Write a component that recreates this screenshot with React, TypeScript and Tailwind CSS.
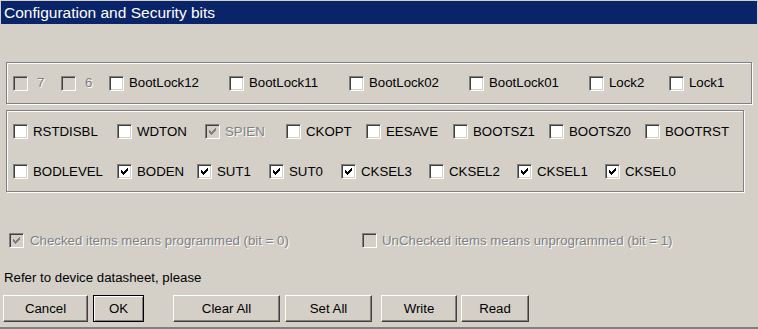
import React from "react";

const CHECK: [number, number][] = [
  [6, 0], [5, 1], [6, 1], [0, 2], [4, 2], [5, 2], [6, 2],
  [0, 3], [1, 3], [3, 3], [4, 3], [5, 3],
  [0, 4], [1, 4], [2, 4], [3, 4], [4, 4],
  [1, 5], [2, 5], [3, 5], [2, 6],
];

function Box({ checked, disabled }: { checked?: boolean; disabled?: boolean }) {
  return (
    <div
      className={`w-[15px] h-[15px] shrink-0 flex items-center justify-center border border-t-[#808080] border-l-[#808080] border-b-white border-r-white shadow-[inset_1px_1px_0_#404040,inset_-1px_-1px_0_#d4d0c8] ${
        disabled ? "bg-[#d4d0c8]" : "bg-white"
      }`}
    >
      {checked && (
        <svg width="7" height="7" viewBox="0 0 7 7" shapeRendering="crispEdges">
          {CHECK.map(([x, y]) => (
            <rect key={`${x}-${y}`} x={x} y={y} width="1" height="1" fill={disabled ? "#808080" : "#000000"} />
          ))}
        </svg>
      )}
    </div>
  );
}

type Item = { label: string; w?: string; checked?: boolean; disabled?: boolean; wide?: boolean };

function Check({ label, w, checked, disabled, wide }: Item) {
  return (
    <div className={`flex items-center shrink-0 ${w ?? ""}`}>
      <Box checked={checked} disabled={disabled} />
      <span
        className={`${wide ? "ml-[9px]" : "ml-[5px]"} whitespace-nowrap ${
          disabled ? "text-[#808080] [text-shadow:1px_1px_0_#ffffff]" : "text-black"
        }`}
      >
        {label}
      </span>
    </div>
  );
}

const row1: Item[] = [
  { label: "7", w: "w-[48px]", disabled: true, wide: true },
  { label: "6", w: "w-[48px]", disabled: true, wide: true },
  { label: "BootLock12", w: "w-[120px]" },
  { label: "BootLock11", w: "w-[120px]" },
  { label: "BootLock02", w: "w-[120px]" },
  { label: "BootLock01", w: "w-[120px]" },
  { label: "Lock2", w: "w-[80px]" },
  { label: "Lock1" },
];

const row2: Item[] = [
  { label: "RSTDISBL", w: "w-[104px]" },
  { label: "WDTON", w: "w-[88px]" },
  { label: "SPIEN", w: "w-[81px]", checked: true, disabled: true },
  { label: "CKOPT", w: "w-[80px]" },
  { label: "EESAVE", w: "w-[87px]" },
  { label: "BOOTSZ1", w: "w-[96px]" },
  { label: "BOOTSZ0", w: "w-[96px]" },
  { label: "BOOTRST" },
];

const row3: Item[] = [
  { label: "BODLEVEL", w: "w-[104px]" },
  { label: "BODEN", w: "w-[80px]", checked: true },
  { label: "SUT1", w: "w-[72px]", checked: true },
  { label: "SUT0", w: "w-[72px]", checked: true },
  { label: "CKSEL3", w: "w-[88px]", checked: true },
  { label: "CKSEL2", w: "w-[88px]" },
  { label: "CKSEL1", w: "w-[88px]", checked: true },
  { label: "CKSEL0", checked: true },
];

function Button({ label, w, def }: { label: string; w: string; def?: boolean }) {
  return (
    <div
      className={`${w} h-[27px] shrink-0 flex items-center justify-center bg-[#d4d0c8] text-black ${
        def
          ? "border border-black shadow-[inset_1px_1px_0_#ffffff,inset_-1px_-1px_0_#808080]"
          : "border border-t-white border-l-white border-b-[#404040] border-r-[#404040] shadow-[inset_-1px_-1px_0_#808080]"
      }`}
    >
      {label}
    </div>
  );
}

export default function App() {
  return (
    <div
      className="w-[758px] h-[329px] bg-[#d4d0c8] flex flex-col pt-[1px] border-b-2 border-[#808080] text-[13.25px] leading-normal overflow-hidden"
      style={{ fontFamily: '"Liberation Sans", Arial, sans-serif' }}
    >
      <div className="mx-[1px] h-[23px] shrink-0 bg-[#0a246a] flex items-center pl-[3px] text-white text-[15.5px]">
        Configuration and Security bits
      </div>

      <div className="ml-[6px] mt-[38px] w-[746px] h-[42px] shrink-0 border border-[#808080] shadow-[inset_1px_1px_0_#ffffff,1px_1px_0_#ffffff] flex items-center pl-[6px]">
        {row1.map((it) => (
          <Check key={it.label} {...it} />
        ))}
      </div>

      <div className="ml-[6px] mt-[6px] w-[738px] h-[82px] shrink-0 border border-[#808080] shadow-[inset_1px_1px_0_#ffffff,1px_1px_0_#ffffff] flex flex-col pl-[6px] pt-[13px] gap-[25px]">
        <div className="flex items-center h-[15px]">
          {row2.map((it) => (
            <Check key={it.label} {...it} />
          ))}
        </div>
        <div className="flex items-center h-[15px]">
          {row3.map((it) => (
            <Check key={it.label} {...it} />
          ))}
        </div>
      </div>

      <div className="mt-[41px] h-[15px] shrink-0 flex items-center pl-[9px]">
        <div className="flex items-center w-[353px] shrink-0">
          <Box checked disabled />
          <span className="ml-[6px] text-[#808080] [text-shadow:1px_1px_0_#ffffff] whitespace-nowrap">
            Checked items means programmed (bit = 0)
          </span>
        </div>
        <div className="flex items-center">
          <Box disabled />
          <span className="ml-[5px] text-[#808080] [text-shadow:1px_1px_0_#ffffff] whitespace-nowrap">
            UnChecked items means unprogrammed (bit = 1)
          </span>
        </div>
      </div>

      <div className="mt-[22px] pl-[4px] h-[16px] leading-[16px] shrink-0 text-black">
        Refer to device datasheet, please
      </div>

      <div className="mt-[9px] pl-[3px] flex items-center">
        <Button label="Cancel" w="w-[85px]" />
        <div className="ml-[5px]">
          <Button label="OK" w="w-[51px]" def />
        </div>
        <div className="ml-[29px]">
          <Button label="Clear All" w="w-[107px]" />
        </div>
        <div className="ml-[5px]">
          <Button label="Set All" w="w-[87px]" />
        </div>
        <div className="ml-[9px]">
          <Button label="Write" w="w-[76px]" />
        </div>
        <div className="ml-[4px]">
          <Button label="Read" w="w-[68px]" />
        </div>
      </div>
    </div>
  );
}
